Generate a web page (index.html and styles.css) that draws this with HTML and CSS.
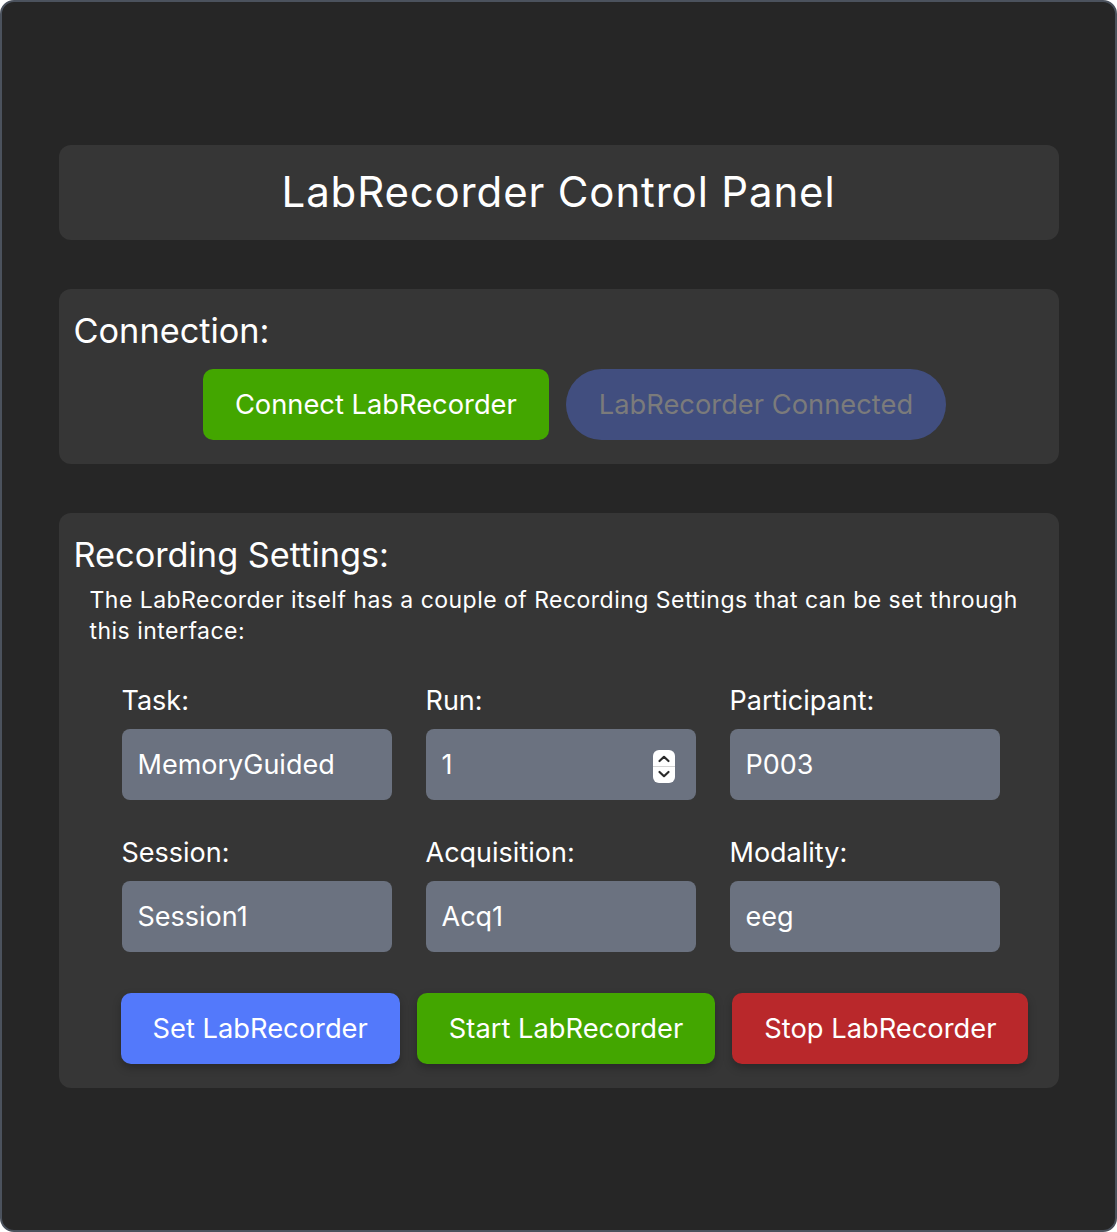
FILE: index.html
```html
<!DOCTYPE html>
<html lang="en">
<head>
<meta charset="utf-8">
<title>LabRecorder Control Panel</title>
<link rel="stylesheet" href="styles.css">
</head>
<body>
<div class="window">
  <main class="content">
    <header class="panel title-panel">
      <h1 class="title">LabRecorder Control Panel</h1>
    </header>

    <section class="panel section">
      <h2 class="section-title">Connection:</h2>
      <div class="button-row">
        <button class="btn btn-green">Connect LabRecorder</button>
        <button class="btn btn-pill">LabRecorder Connected</button>
      </div>
    </section>

    <section class="panel section">
      <h2 class="section-title">Recording Settings:</h2>
      <p class="desc">The LabRecorder itself has a couple of Recording Settings that can be set through this interface:</p>
      <div class="fields">
        <label class="field">
          <span class="field-label">Task:</span>
          <input class="field-input" type="text" value="MemoryGuided">
        </label>
        <label class="field">
          <span class="field-label">Run:</span>
          <span class="number-wrap">
            <input class="field-input" type="text" value="1">
            <span class="spinner">
              <svg width="22" height="33" viewBox="0 0 22 33">
                <rect x="0" y="0" width="22" height="33" rx="6" fill="#ffffff"/>
                <line x1="0" y1="16.5" x2="22" y2="16.5" stroke="#d4d4d4" stroke-width="1"/>
                <path d="M6.5 11 L11 6.8 L15.5 11" fill="none" stroke="#2b2b2b" stroke-width="2.2" stroke-linecap="round" stroke-linejoin="round"/>
                <path d="M6.5 22 L11 26.2 L15.5 22" fill="none" stroke="#2b2b2b" stroke-width="2.2" stroke-linecap="round" stroke-linejoin="round"/>
              </svg>
            </span>
          </span>
        </label>
        <label class="field">
          <span class="field-label">Participant:</span>
          <input class="field-input" type="text" value="P003">
        </label>
        <label class="field">
          <span class="field-label">Session:</span>
          <input class="field-input" type="text" value="Session1">
        </label>
        <label class="field">
          <span class="field-label">Acquisition:</span>
          <input class="field-input" type="text" value="Acq1">
        </label>
        <label class="field">
          <span class="field-label">Modality:</span>
          <input class="field-input" type="text" value="eeg">
        </label>
      </div>
      <div class="button-row actions">
        <button class="btn btn-blue btn-shadow">Set LabRecorder</button>
        <button class="btn btn-green btn-shadow">Start LabRecorder</button>
        <button class="btn btn-red btn-shadow">Stop LabRecorder</button>
      </div>
    </section>
  </main>
</div>
</body>
</html>
```

FILE: styles.css
```css
* {
  box-sizing: border-box;
}

html, body {
  margin: 0;
  padding: 0;
  background: #ffffff;
}

body {
  font-family: Inter, "Noto Sans", "Liberation Sans", sans-serif;
  color: #ffffff;
}

.window {
  width: 1117px;
  height: 1232px;
  background: #262626;
  border: 2px solid #4b525d;
  border-radius: 14px;
  display: flex;
  align-items: center;
  justify-content: center;
}

.content {
  width: 1000px;
  display: flex;
  flex-direction: column;
  gap: 49px;
}

.panel {
  background: #363636;
  border-radius: 12px;
}

.title-panel {
  height: 95px;
  display: flex;
  align-items: center;
  justify-content: center;
}

.title {
  margin: 0;
  font-size: 42px;
  font-weight: 400;
  line-height: 50px;
  letter-spacing: 0.85px;
}

.section {
  padding: 20px 16px 24px 15px;
}

.section-title {
  margin: 0;
  font-size: 34.3px;
  font-weight: 400;
  line-height: 44px;
  letter-spacing: 0;
}

.button-row {
  display: flex;
  justify-content: center;
  gap: 17px;
  padding-left: 33px;
  margin-top: 16px;
}

.btn {
  font-family: inherit;
  font-size: 27.3px;
  line-height: 31px;
  height: 71px;
  padding: 20px 32px;
  border: none;
  border-radius: 10px;
  color: #ffffff;
  cursor: pointer;
  letter-spacing: 0;
  white-space: nowrap;
}

.btn-green {
  background: #43a600;
}

.btn-blue {
  background: #5379fb;
}

.btn-red {
  background: #b9282b;
}

.btn-pill {
  background: #414e7f;
  color: #7b7b7b;
  border-radius: 36px;
  padding: 20px 33px;
}

.btn-shadow {
  box-shadow: 0 4px 8px rgba(0, 0, 0, 0.25);
}

.desc {
  margin: 8px 0 0 16px;
  font-size: 23px;
  line-height: 31px;
  letter-spacing: 0.47px;
}

.fields {
  display: grid;
  grid-template-columns: repeat(3, 270px);
  column-gap: 34px;
  row-gap: 36px;
  margin: 37px 0 0 48px;
}

.field {
  display: flex;
  flex-direction: column;
  gap: 11px;
}

.field-label {
  font-size: 27px;
  line-height: 34px;
}

.field-input {
  width: 100%;
  height: 71px;
  background: #6b7280;
  border: none;
  border-radius: 8px;
  padding: 0 16px;
  font-family: inherit;
  font-size: 27px;
  color: #ffffff;
  outline: none;
}

.number-wrap {
  position: relative;
  display: block;
}

.spinner {
  position: absolute;
  right: 21px;
  top: 21px;
  width: 22px;
  height: 33px;
  display: block;
}

.spinner svg {
  display: block;
}

.actions {
  margin-top: 41px;
}
```
